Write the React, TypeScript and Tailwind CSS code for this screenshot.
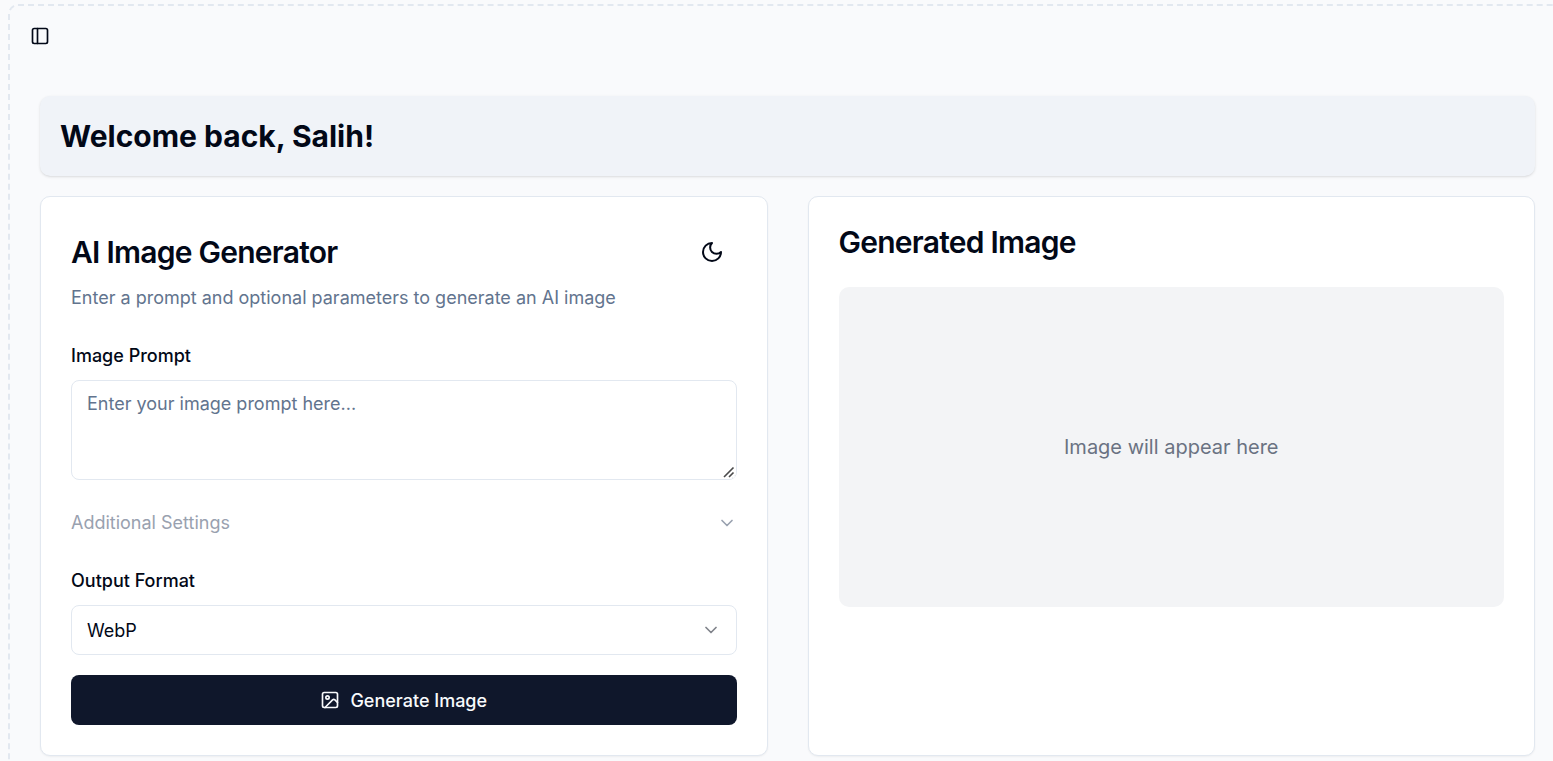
import { useState } from "react";
import { ChevronDown, Image as ImageIcon } from "lucide-react";

function PanelLeftIcon() {
  return (
    <svg viewBox="0 0 24 24" className="size-5" fill="none" stroke="currentColor" strokeWidth="2" strokeLinecap="round" strokeLinejoin="round" aria-hidden="true">
      <rect width="18" height="18" x="3" y="3" rx="2" />
      <path d="M9 3v18" />
    </svg>
  );
}

function MoonIcon() {
  return (
    <svg viewBox="0 0 24 24" className="size-6" fill="none" stroke="currentColor" strokeWidth="2" strokeLinecap="round" strokeLinejoin="round" aria-hidden="true">
      <path d="M12 3a6 6 0 0 0 9 9 9 9 0 1 1-9-9Z" />
    </svg>
  );
}

function ResizeGrip() {
  return (
    <svg viewBox="0 0 14 14" className="pointer-events-none col-start-1 row-start-1 mr-px mb-px size-3.5 self-end justify-self-end" fill="none" stroke="#4b4b4b" strokeWidth="1.6" aria-hidden="true">
      <path d="M0 0H14V7A7 7 0 0 1 7 14H0Z" fill="#ffffff" stroke="none" />
      <path d="M2 12 11.5 2.5M7 12 11.5 7.5" />
    </svg>
  );
}

function GeneratorCard() {
  const [prompt, setPrompt] = useState("");
  const [format, setFormat] = useState("webp");

  return (
    <section className="rounded-[10px] border border-slate-200 bg-white p-[30px] shadow-xs">
      <div className="flex h-[50px] items-center justify-between">
        <h2 className="text-[30px] leading-[30px] font-semibold tracking-tight">AI Image Generator</h2>
        <button type="button" aria-label="Toggle theme" className="flex size-[50px] items-center justify-center rounded-lg">
          <MoonIcon />
        </button>
      </div>
      <p className="mt-2 text-[18px] leading-[25px] text-slate-500">
        Enter a prompt and optional parameters to generate an AI image
      </p>

      <form className="mt-[30px] flex flex-col gap-5" onSubmit={(e) => e.preventDefault()}>
        <div className="flex flex-col gap-2.5">
          <label htmlFor="prompt" className="pt-0.5 text-[18px] leading-7 font-medium">
            Image Prompt
          </label>
          <div className="grid">
            <textarea
              id="prompt"
              value={prompt}
              onChange={(e) => setPrompt(e.target.value)}
              placeholder="Enter your image prompt here..."
              className="col-start-1 row-start-1 block h-[100px] w-full rounded-lg border border-slate-200 bg-white px-[15px] py-2.5 text-[18px] leading-[25px] placeholder:text-slate-500"
            />
            <ResizeGrip />
          </div>
        </div>

        <button type="button" aria-expanded="false" className="flex items-center justify-between py-2.5 text-[18px] leading-[25px] text-gray-400">
          Additional Settings
          <ChevronDown className="size-5" />
        </button>

        <div className="flex flex-col gap-2.5">
          <label htmlFor="format" className="pt-0.5 text-[18px] leading-7 font-medium">
            Output Format
          </label>
          <div className="grid items-center">
            <select
              id="format"
              value={format}
              onChange={(e) => setFormat(e.target.value)}
              className="col-start-1 row-start-1 h-[50px] w-full appearance-none rounded-lg border border-slate-200 bg-white px-[15px] text-[18px]"
            >
              <option value="webp">WebP</option>
              <option value="png">PNG</option>
              <option value="jpg">JPG</option>
            </select>
            <ChevronDown className="pointer-events-none col-start-1 row-start-1 mr-4 size-5 justify-self-end opacity-50" />
          </div>
        </div>

        <button type="submit" className="flex h-[50px] items-center justify-center gap-2.5 rounded-lg bg-slate-900 text-[18px] font-medium text-slate-50">
          <ImageIcon className="size-5" />
          Generate Image
        </button>
      </form>
    </section>
  );
}

function ResultCard() {
  return (
    <section className="rounded-[10px] border border-slate-200 bg-white p-[30px] shadow-xs">
      <h2 className="text-[30px] leading-[30px] font-semibold tracking-tight">Generated Image</h2>
      <div className="mt-[30px] flex h-80 items-center justify-center rounded-[10px] bg-gray-100">
        <p className="text-[20px] leading-[30px] text-gray-500">Image will appear here</p>
      </div>
    </section>
  );
}

export default function App() {
  return (
    <div className="flex min-h-screen flex-col bg-[#f9fafc] pt-1 pl-2 font-['Inter',sans-serif] text-[#020817]">
      <div className="grow rounded-tl-[10px] border-t-2 border-l-2 border-dashed border-slate-200">
        <header className="flex h-[60px] items-center px-3">
          <button type="button" aria-label="Toggle sidebar" className="flex size-9 items-center justify-center rounded-lg">
            <PanelLeftIcon />
          </button>
        </header>
        <main className="flex flex-col gap-5 pt-[30px] pr-[18px] pl-[30px]">
          <div className="rounded-[10px] bg-[#f0f3f8] p-5 shadow">
            <h1 className="text-[30px] leading-10 font-bold">Welcome back, Salih!</h1>
          </div>
          <div className="grid grid-cols-2 gap-10">
            <GeneratorCard />
            <ResultCard />
          </div>
        </main>
      </div>
    </div>
  );
}
